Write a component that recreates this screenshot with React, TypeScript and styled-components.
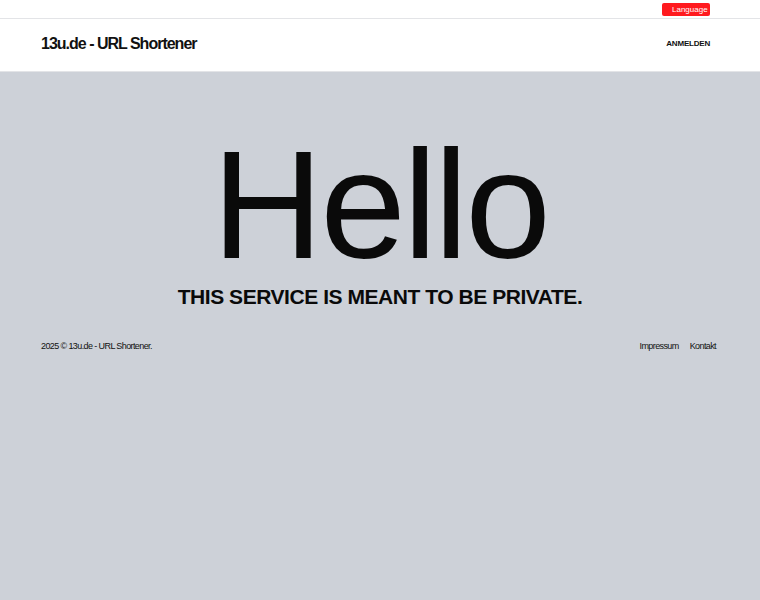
import React from 'react'
import styled, { createGlobalStyle } from 'styled-components'

const GlobalStyle = createGlobalStyle`
  html, body {
    margin: 0;
    padding: 0;
    background: #cdd1d8;
    font-family: "Liberation Sans", Arial, sans-serif;
    color: #111;
  }
`

const TopBar = styled.div`
  height: 18px;
  background: #fff;
  border-bottom: 1px solid #e3e4e7;
  display: flex;
  justify-content: flex-end;
  align-items: center;
  padding: 0 50px 0 0;
`

const LangButton = styled.button`
  height: 13px;
  width: 48px;
  background: #ff1a1f;
  color: #fff;
  border: none;
  border-radius: 2px;
  font-family: inherit;
  font-size: 8px;
  padding: 0 0 0 10px;
  text-align: left;
  cursor: pointer;
`

const Header = styled.header`
  height: 49px;
  background: #fff;
  border-bottom: 1px solid #e3e4e7;
  display: flex;
  align-items: center;
  justify-content: space-between;
  padding: 0 50px 3px 41px;
`

const Brand = styled.div`
  font-size: 16px;
  font-weight: bold;
  letter-spacing: -1px;
  color: #111;
`

const NavLink = styled.a`
  font-size: 8px;
  font-weight: bold;
  letter-spacing: -0.2px;
  color: #111;
  text-decoration: none;
`

const Hero = styled.main`
  display: flex;
  flex-direction: column;
  align-items: center;
  padding-top: 56px;
`

const Hello = styled.h1`
  margin: 0;
  font-size: 154px;
  font-weight: normal;
  line-height: 154px;
  letter-spacing: -3px;
  color: #0a0a0a;
`

const Tagline = styled.h2`
  margin: 2px 0 0;
  font-size: 21px;
  font-weight: bold;
  line-height: 26px;
  letter-spacing: -0.45px;
  color: #0a0a0a;
`

const Footer = styled.footer`
  display: flex;
  justify-content: space-between;
  align-items: center;
  padding: 31px 44px 0 41px;
  font-size: 9px;
  letter-spacing: -0.6px;
  color: #111;
`

const FooterLinks = styled.div`
  display: flex;
  gap: 11px;
`

const FooterLink = styled.a`
  color: #111;
  text-decoration: none;
`

const App = () => {
  return (
    <>
      <GlobalStyle />
      <TopBar>
        <LangButton>Language</LangButton>
      </TopBar>
      <Header>
        <Brand>13u.de - URL Shortener</Brand>
        <NavLink href="#">ANMELDEN</NavLink>
      </Header>
      <Hero>
        <Hello>Hello</Hello>
        <Tagline>THIS SERVICE IS MEANT TO BE PRIVATE.</Tagline>
      </Hero>
      <Footer>
        <span>2025 © 13u.de - URL Shortener.</span>
        <FooterLinks>
          <FooterLink href="#">Impressum</FooterLink>
          <FooterLink href="#">Kontakt</FooterLink>
        </FooterLinks>
      </Footer>
    </>
  )
}

export default App
